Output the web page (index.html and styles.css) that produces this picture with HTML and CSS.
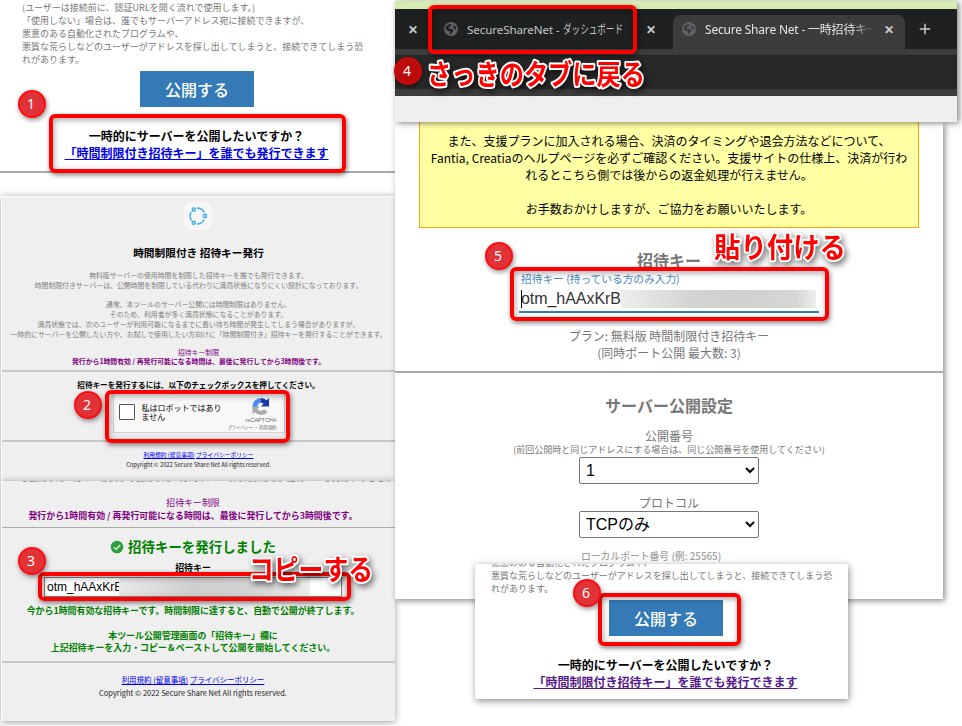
FILE: index.html
```html
<!DOCTYPE html>
<html lang="ja">
<head>
<meta charset="utf-8">
<title>SecureShareNet</title>
<link rel="stylesheet" href="styles.css">
</head>
<body>
<main class="canvas">

  <section class="panel publish">
    <div class="hint">
      <p>(ユーザーは接続前に、認証URLを開く流れで使用します。)</p>
      <p>「使用しない」場合は、誰でもサーバーアドレス宛に接続できますが、</p>
      <p>悪意のある自動化されたプログラムや、</p>
      <p>悪質な荒らしなどのユーザーがアドレスを探し出してしまうと、接続できてしまう恐</p>
      <p>れがあります。</p>
    </div>
    <button class="go">公開する</button>
    <p class="ask">一時的にサーバーを公開したいですか？</p>
    <p class="ask"><a>「時間制限付き招待キー」を誰でも発行できます</a></p>
    <hr>
  </section>

  <section class="panel issue">
    <svg class="logo" viewBox="0 0 28 28"><rect width="28" height="28" rx="8" fill="#f7f7f7"/><g fill="none" stroke="#4db3e3" stroke-width="1.6"><path d="M7.6 18.6A8 8 0 0 1 7.3 9.8M13 6.1A8 8 0 0 1 20.4 10.4M20.2 17.6A8 8 0 0 1 13.2 21.9"/><circle cx="9.8" cy="7.6" r="1.6"/><circle cx="21" cy="14" r="1.6"/><circle cx="9.8" cy="20.8" r="1.6"/></g></svg>
    <h1>時間制限付き 招待キー発行</h1>
    <div class="about">
      <p>無料版サーバーの使用時間を制限した招待キーを誰でも発行できます。</p>
      <p>時間制限付きサーバーは、公開時間を制限している代わりに満員状態になりにくい設計になっております。</p>
      <p>&nbsp;</p>
      <p>通常、本ツールのサーバー公開には時間制限はありません。</p>
      <p>そのため、利用者が多く満員状態になることがあります。</p>
      <p>満員状態では、次のユーザーが利用可能になるまでに長い待ち時間が発生してしまう場合がありますが、</p>
      <p>一時的にサーバーを公開したい方や、お試しで使用したい方向けに「時間制限付き」招待キーを発行することができます。</p>
    </div>
    <div class="limit">
      <p>招待キー制限</p>
      <p><b>発行から1時間有効 / 再発行可能になる時間は、最後に発行してから3時間後です。</b></p>
    </div>
    <hr>
    <p class="prompt">招待キーを発行するには、以下のチェックボックスを押してください。</p>
    <div class="captcha">
      <span class="check"></span>
      <span class="robot">私はロボットではあり<br>ません</span>
      <span class="brand">
        <svg viewBox="0 0 20 20"><path d="M1 10A9 9 0 0 1 10 1V6A4.500 4.500 0 0 0 6 9L8 11H1Z" fill="#4a8af4"/><path d="M10 1A9 9 0 0 1 16 3.500L18.500 1V10H10L12.600 7A5 5 0 0 0 10 6Z" fill="#1c3aa9"/><path d="M1 10H8L6 12.500A5 5 0 0 0 13.500 13L17 16A9 9 0 0 1 3.500 16L1 18Z" fill="#ababab"/></svg>
        <span class="name">reCAPTCHA</span>
        <span class="terms">プライバシー ・ 利用規約</span>
      </span>
    </div>
    <hr>
    <footer><p><a>利用規約 (留意事項)</a> <a>プライバシーポリシー</a></p><p>Copyright © 2022 Secure Share Net All rights reserved.</p></footer>
  </section>

  <section class="panel result">
    <p class="cut">一時的にサーバーを公開したい方や、お試しで使用したい方向けに「時間制限付き」招待キーを発行することができます。</p>
    <div class="limit">
      <p>招待キー制限</p>
      <p><b>発行から1時間有効 / 再発行可能になる時間は、最後に発行してから3時間後です。</b></p>
    </div>
    <hr class="thin">
    <h2><svg viewBox="0 0 14 14"><circle cx="7" cy="7" r="6.300" fill="#2e9e3e"/><path d="M4 7.200L6.200 9.300L10.200 5" fill="none" stroke="#d8f0da" stroke-width="1.400"/></svg>招待キーを発行しました</h2>
    <p class="keylabel">招待キー</p>
    <div class="keybox"><span class="key">otm_hAAxKrE</span><span class="mask"></span></div>
    <div class="done">
      <p>今から1時間有効な招待キーです。時間制限に達すると、自動で公開が終了します。</p>
      <p>&nbsp;</p>
      <p>本ツール公開管理画面の「招待キー」欄に</p>
      <p>上記招待キーを入力・コピー＆ペーストして公開を開始してください。</p>
    </div>
    <hr>
    <footer><p><a>利用規約 (留意事項)</a> <a>プライバシーポリシー</a></p><p>Copyright © 2022 Secure Share Net All rights reserved.</p></footer>
  </section>

  <section class="panel settings">
    <div class="note">
      <p>また、支援プランに加入される場合、決済のタイミングや退会方法などについて、</p>
      <p>Fantia, Creatiaのヘルプページを必ずご確認ください。支援サイトの仕様上、決済が行わ</p>
      <p>れるとこちら側では後からの返金処理が行えません。</p>
      <p>&nbsp;</p>
      <p>お手数おかけしますが、ご協力をお願いいたします。</p>
    </div>
    <h2>招待キー</h2>
    <div class="field">
      <label>招待キー (持っている方のみ入力)</label>
      <div class="value"><span class="key">otm_hAAxKrB</span><span class="mask"></span></div>
    </div>
    <div class="plan"><p>プラン: 無料版 時間制限付き招待キー</p><p>(同時ポート公開 最大数: 3)</p></div>
    <hr>
    <h2 class="second">サーバー公開設定</h2>
    <p class="lab">公開番号</p>
    <p class="sub">(前回公開時と同じアドレスにする場合は、同じ公開番号を使用してください)</p>
    <select><option>1</option></select>
    <p class="lab proto">プロトコル</p>
    <select class="tcp"><option>TCPのみ</option></select>
    <p class="port">ローカルポート番号 (例: 25565)</p>
  </section>

  <section class="panel browser">
    <div class="wall"></div>
    <div class="tabs">
      <span class="x first">✕</span>
      <div class="tab"><svg class="globe" viewBox="0 0 14 14"><circle cx="7" cy="7" r="7" fill="#5f6368"/><path d="M1.500 7.500L2 4.500Q4 1.800 8 2L6.500 4.200L4.800 5L5 6.800L8.500 7L9.500 8.500L8 10.500L6.800 12.200L5.500 12L6.200 9.800L4 8.800ZM9.500 3.200L12 5L12.300 8L10.500 7L9 5Z" fill="#202124"/></svg><span class="t1">SecureShareNet - </span><svg class="kana" viewBox="0 0 60 16"><text x="0" y="12.500" textLength="60" lengthAdjust="spacingAndGlyphs">ダッシュボード</text></svg></div>
      <span class="x">✕</span>
      <div class="tab active"><svg class="globe" viewBox="0 0 14 14"><circle cx="7" cy="7" r="7" fill="#5f6368"/><path d="M1.500 7.500L2 4.500Q4 1.800 8 2L6.500 4.200L4.800 5L5 6.800L8.500 7L9.500 8.500L8 10.500L6.800 12.200L5.500 12L6.200 9.800L4 8.800ZM9.500 3.200L12 5L12.300 8L10.500 7L9 5Z" fill="#3c3c3c"/></svg><span class="t2">Secure Share Net - 一時招待<span class="narrow">キー</span></span><span class="x">✕</span></div>
      <svg class="plus" viewBox="0 0 12 12"><path d="M6 .8V11.200M.8 6H11.200" stroke="#c6c8ca" stroke-width="1.500"/></svg>
    </div>
    <div class="bar"></div>
    <div class="page"></div>
  </section>

  <section class="panel publish again">
    <div class="hint">
      <p>悪意のある自動化されたプログラムや、</p>
      <p>悪質な荒らしなどのユーザーがアドレスを探し出してしまうと、接続できてしまう恐</p>
      <p>れがあります。</p>
    </div>
    <button class="go">公開する</button>
    <p class="ask">一時的にサーバーを公開したいですか？</p>
    <p class="ask"><a>「時間制限付き招待キー」を誰でも発行できます</a></p>
  </section>

  <div class="frame f1"></div><div class="frame f2"></div><div class="frame f3"></div>
  <div class="frame f4"></div><div class="frame f5"></div><div class="frame f6"></div>
  <span class="step s1">1</span><span class="step s2">2</span><span class="step s3">3</span>
  <span class="step s4">4</span><span class="step s5">5</span><span class="step s6">6</span>
  <svg class="callouts" viewBox="0 0 962 726">
    <text x="427" y="84.500" font-size="28" textLength="218" lengthAdjust="spacingAndGlyphs">さっきのタブに戻る</text>
    <text x="714" y="257.500" font-size="28.500" textLength="132" lengthAdjust="spacingAndGlyphs">貼り付ける</text>
    <text x="249" y="580" font-size="28" textLength="124" lengthAdjust="spacingAndGlyphs">コピーする</text>
  </svg>
</main>
</body>
</html>
```
FILE: styles.css
```css
* { box-sizing: border-box; }
body { margin: 0; background: #fff; font-family: "Noto Sans CJK JP", sans-serif; }
p, h1, h2 { margin: 0; white-space: nowrap; }
hr { border: 0; height: 2px; margin: 0; background: #ababab; width: 100%; flex: none; }
a { text-decoration: underline; color: #00e; }
.canvas { position: relative; width: 962px; height: 726px; overflow: hidden; }
.panel { position: absolute; display: flex; flex-direction: column; align-items: center; overflow: hidden; }

/* publish page */
.publish { left: 0; top: 0; width: 395px; height: 190px; padding-top: 1px; }
.hint { align-self: stretch; padding-left: 22px; font-size: 9px; line-height: 13px; color: #777; }
.go { width: 114px; height: 36px; margin: 5px 1px 20px 0; padding: 0 0 1px; border: 0; background: #337ab7; color: #fff; font: 500 16px "Noto Sans CJK JP", sans-serif; flex: none; }
.ask { font-size: 12px; line-height: 17px; font-weight: 700; margin-right: 2px; }
.publish hr { margin-top: 10px; }
.again { left: 475px; top: 564px; width: 373px; height: 135px; padding: 0; background: #fff; box-shadow: 1px 2px 7px rgba(0,0,0,.45); }
.again .hint { padding-left: 16px; margin-top: -8px; }
.again .go { margin-right: 0; margin-left: 9px; }
.again .ask { margin: 0 0 0 8px; }
.again .ask a { color: #551a8b; }

/* key issue page */
.issue, .result { background: #efefef; left: 1px; width: 394px; border-left: 1px solid #fff; box-shadow: 0 1px 7px rgba(0,0,0,.4); }
.issue { top: 196px; height: 285px; padding-top: 5px; border-top: 1px solid #fff; font-size: 6.87px; }
.issue hr, .result hr { background: #c6c6c6; }
.logo { width: 28px; height: 28px; margin-right: 2px; flex: none; }
h1 { margin-top: 15px; font-size: 10.7px; line-height: 16px; }
.about { margin-top: 10px; line-height: 9.8px; color: #808080; text-align: center; }
.limit { text-align: center; color: #800080; }
.issue .limit { margin: 8px 0 3px; line-height: 9.8px; }
.prompt { margin-top: 8px; font-size: 7.6px; font-weight: 700; line-height: 10px; }
.captcha { width: 172px; height: 40px; margin: 3px 0 7px; padding: 0 7px 0 5px; display: flex; align-items: center; flex: none; background: #f8f8f8; border: 1px solid #d2d2d2; }
.check { width: 16px; height: 16px; margin-top: -2px; border: 1.5px solid #555; border-radius: 1px; background: #fff; flex: none; }
.robot { margin: -2px auto 0 7px; font-size: 8px; line-height: 9.6px; white-space: nowrap; }
.brand { width: 50px; padding-top: 2px; display: flex; flex-direction: column; align-items: flex-end; color: #666; white-space: nowrap; }
.brand svg { width: 20px; height: 19px; margin-right: 6px; }
.name { font: 5.5px/8px "Liberation Sans", sans-serif; }
.terms { font-size: 4.3px; line-height: 7px; }
footer { text-align: center; color: #222; }
.issue footer { margin-top: 8px; font-size: 5.75px; line-height: 10px; }

/* issued key page */
.result { top: 481px; height: 240px; padding-right: 11px; font-size: 8.93px; }
.cut { height: 3px; line-height: 13px; flex: none; display: flex; align-items: flex-end; color: #777; }
.result .limit { margin: 13px 0 4px; line-height: 12.8px; }
.result hr { width: calc(100% + 11px); margin-right: -11px; }
.result hr.thin { height: 1px; background: #aaa; margin-top: 0; }
.result h2 { display: flex; align-items: center; gap: 4px; margin-top: 8px; font-size: 13.45px; line-height: 20px; color: #008000; }
.result h2 svg { width: 14px; height: 14px; margin-top: 3px; }
.keylabel { margin-top: 5px; font-weight: 700; line-height: 13px; }
.keybox { width: 298px; height: 20px; margin-top: 3px; display: flex; flex: none; border: 1.5px solid #858585; background: #fff; }
.keybox .key { width: 74px; overflow: hidden; padding-left: 2px; font: 12px/18px "Liberation Sans", sans-serif; }
.keybox .mask { width: 191px; background: linear-gradient(100deg, #e8e8e8, #cfcfcf 40%, #d2d2d2 65%, #eee); }
.done { margin: 8px 0 6px; font-weight: 700; line-height: 12.6px; color: #008000; text-align: center; }
.result footer { margin-top: 11px; font-size: 7.48px; line-height: 12.6px; }

/* settings page */
.settings { left: 395px; top: 122px; width: 548px; height: 477px; background: #fff; color: #777; font-size: 12px; line-height: 17px; box-shadow: 2px 2px 6px rgba(0,0,0,.45); }
.note { width: 500px; padding: 10px 0; border: 1px solid #ffa500; border-top: 0; background: #ffffa3; color: #000; text-align: center; flex: none; }
.settings h2 { margin-top: 20px; font-size: 16px; line-height: 24px; }
.field { width: 300px; border-bottom: 2px solid #337ab7; }
.field label { display: block; padding-left: 2px; font-size: 10.7px; line-height: 14px; color: #4a88bf; }
.value { display: flex; height: 25px; align-items: center; color: #333; }
.value .key { border-left: 1px solid #000; margin-left: 2px; font: 16px/18px "Liberation Sans", sans-serif; letter-spacing: -.05px; width: 100px; overflow: hidden; text-indent: -1px; }
.value .mask { width: 195px; height: 18px; background: linear-gradient(90deg, #eee, #d4d4d4 35%, #d0d0d0 60%, #d6d6d6 90%, #eee); }
.plan { text-align: center; margin: 14px 0 10px; }
.settings h2.second { margin-top: 20px; }
.lab { margin-top: 10px; }
.sub { margin-bottom: 1px; font-size: 9px; line-height: 12px; }
select { width: 180px; height: 27px; flex: none; padding-left: 2px; border: 1px solid #767676; border-radius: 2px; background: #fff; color: #000; font: 16px "Liberation Sans", "Noto Sans CJK JP", sans-serif; }
.port { align-self: flex-start; margin: 11px 0 0 186px; font-size: 9.8px; font-weight: 500; line-height: 14px; color: #a0a0a0; }

/* browser window */
.browser { left: 395px; top: 1px; width: 562px; height: 121px; align-items: stretch; background: #3c3c3c; box-shadow: 2px 1px 6px rgba(0,0,0,.5); }
.wall { height: 8px; background: #d6eab2; }
.tabs { height: 40px; display: flex; align-items: center; background: #1f2120; color: #c3c5c8; font: 12px "Noto Sans", "Noto Sans CJK JP", sans-serif; }
.x { width: 12px; font-size: 12px; font-weight: 700; color: #d0d0d0; text-align: center; flex: none; }
.x.first { margin: 0 25px 0 12px; }
.tab { display: flex; align-items: center; width: 201px; white-space: pre; }
.globe { width: 14px; height: 14px; margin-right: 9px; flex: none; }
.t1 { width: 96px; font-size: 11.6px; letter-spacing: -.1px; }
.kana { width: 60px; height: 16px; fill: #c3c5c8; font: 12px "Noto Sans CJK JP", sans-serif; }
.tab.active { width: 232px; height: 34px; margin: 6px 14px 0 16px; padding: 0 10px 6px 9px; border-radius: 8px 8px 0 0; background: #3c3c3c; color: #e4e5e7; }
.t2 { width: 168px; margin-right: 10px; overflow: hidden; letter-spacing: -.2px; -webkit-mask-image: linear-gradient(90deg, #000 88%, transparent); mask-image: linear-gradient(90deg, #000 88%, transparent); }
.narrow { letter-spacing: -2px; }
.plus { width: 12px; height: 12px; }
.bar { height: 34px; margin: 6px 0 7px; background: #282828; }
.page { height: 26px; background: #efefef; }

/* annotations over the pages */
.frame { position: absolute; border: 4px solid #f00; border-radius: 6px; box-shadow: 1px 2px 5px rgba(0,0,0,.5), inset 1px 2px 6px rgba(0,0,0,.35); }
.f1 { left: 49px; top: 114px; width: 297px; height: 59px; }
.f2 { left: 105px; top: 390px; width: 185px; height: 53px; }
.f3 { left: 38px; top: 572px; width: 313px; height: 29px; }
.f4 { left: 428px; top: 5px; width: 209px; height: 49px; }
.f5 { left: 510px; top: 267px; width: 319px; height: 54px; }
.f6 { left: 598px; top: 593px; width: 143px; height: 53px; }
.step { position: absolute; width: 28px; height: 28px; border: 2px solid #fa0f14; border-radius: 50%; background: #e13238; color: #fff; font: 14px/23px "Noto Sans", sans-serif; text-align: center; padding-right: 2px; box-shadow: 1px 2px 5px rgba(0,0,0,.45); }
.s1 { left: 18px; top: 90px; }
.s2 { left: 74px; top: 391px; }
.s3 { left: 18px; top: 547px; }
.s4 { left: 394px; top: 57px; background: #bd0a0a; border-color: #c80a0a; }
.s5 { left: 485px; top: 242px; }
.s6 { left: 573px; top: 579px; }
.callouts { position: absolute; left: 0; top: 0; width: 962px; height: 726px; font-family: "Noto Sans CJK JP", sans-serif; font-weight: 700; fill: #f00; stroke: #fff; stroke-width: 4px; stroke-linejoin: round; paint-order: stroke; filter: drop-shadow(2px 3px 3px rgba(0,0,0,.55)); }
```
